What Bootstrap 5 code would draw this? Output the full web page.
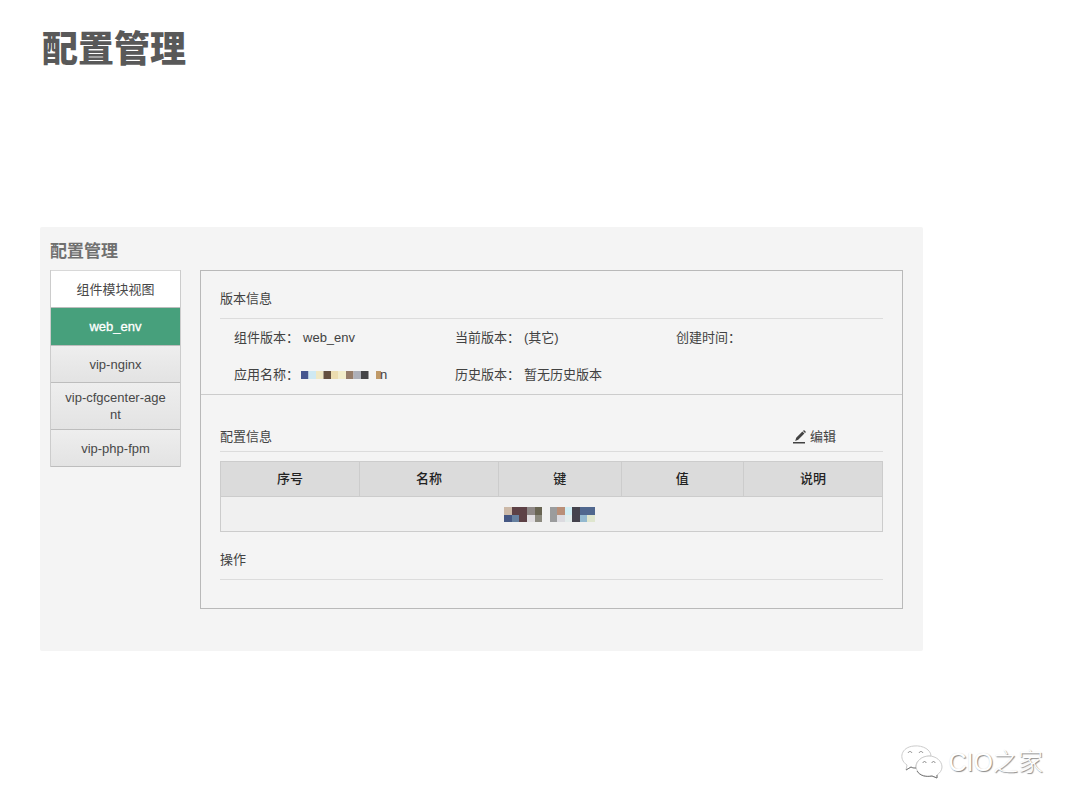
<!DOCTYPE html>
<html lang="zh-CN">
<head>
<meta charset="utf-8">
<meta name="viewport" content="width=device-width, initial-scale=1">
<title>配置管理</title>
<link href="https://cdn.jsdelivr.net/npm/bootstrap@5.3.0/dist/css/bootstrap.min.css" rel="stylesheet">
<style>
  body { font: 13px/20px "Liberation Sans", "Noto Sans CJK SC", sans-serif; color: #424242; background: #fff; }
  .page-title { font-size: 36px; line-height: 40px; font-weight: 900; color: #595959; padding: 30px 42px 0; margin-bottom: 157px; }
  .config-panel { margin: 0 157px 0 40px; padding: 13px 20px 42px 10px; background: #f4f4f4; border-radius: 2px; }
  .panel-title { font-size: 17px; line-height: 24px; margin-bottom: 6px; font-weight: 700; color: #707070; }
  .panel-body-row { gap: 19px; }
  .module-nav { width: 131px; flex: none; text-align: center; border: solid #ccc; border-width: 0 1px; }
  .module-head, .module-nav a { display: flex; align-items: center; justify-content: center; min-height: 37px; padding: 6px 12px; line-height: 17px; word-break: break-all; border-bottom: 1px solid #bdbdbd; color: #484848; text-decoration: none; background: linear-gradient(#eee, #e3e3e3); }
  .module-nav .module-head { min-height: 38px; background: #fff; border-top: 1px solid #d8d8d8; }
  .module-nav a.active { min-height: 38px; background: #47a07c; color: #fff; -webkit-text-stroke: .3px #fff; }
  .detail-box { border: 1px solid #b9b9b9; }
  .detail-part { padding: 0 19px; }
  .detail-part + .detail-part { border-top: 1px solid #ccc; }
  .part-head { padding: 18px 0 9px; border-bottom: 1px solid #dcdcdc; }
  .part-head h3 { font-size: 13px; line-height: 20px; font-weight: 400; margin: 0; }
  .part-head.config-head { padding: 32px 47px 4px 0; }
  .version-list { padding-bottom: 1px; }
  .info-item { height: 37px; padding-left: 14px; gap: 4px; }
  .info-item dt { font-weight: 400; white-space: nowrap; }
  .info-item dd { margin: 0; white-space: nowrap; }
  .edit-btn { color: #424242; font-size: 13px; line-height: 20px; gap: 3px; }
  .config-table { margin: 9px 0 0; width: 100%; table-layout: fixed; border-collapse: collapse; text-align: center; }
  .config-table th, .config-table td { height: 35px; padding: 0; border: 1px solid #ccc; vertical-align: middle; }
  .config-table th { background: #dbdbdb; color: #222; font-weight: 500; }
  .config-table td { background: #f0f0f0; }
  .action-part { min-height: 76px; }
  .source-mark { padding: 0 37px 31px; gap: 6px; color: #fff; font-size: 25px; line-height: 32px; font-weight: 300; text-shadow: 1px 1px 1px #888, 0 0 1px #ddd; }
</style>
</head>
<body>
<main class="min-vh-100 d-flex flex-column">
  <h1 class="page-title">配置管理</h1>
  <section class="config-panel">
    <h2 class="panel-title">配置管理</h2>
    <div class="panel-body-row d-flex align-items-start">
      <nav class="module-nav" aria-label="组件模块视图">
        <div class="module-head">组件模块视图</div>
        <a href="#" class="active" aria-current="page">web_env</a>
        <a href="#">vip-nginx</a>
        <a href="#">vip-cfgcenter-agent</a>
        <a href="#">vip-php-fpm</a>
      </nav>
      <div class="detail-box flex-grow-1">
        <section class="detail-part">
          <div class="part-head"><h3>版本信息</h3></div>
          <dl class="version-list row row-cols-3 g-0 mb-0">
            <div class="info-item col d-flex align-items-center"><dt>组件版本：</dt><dd>web_env</dd></div>
            <div class="info-item col d-flex align-items-center"><dt>当前版本：</dt><dd>(其它)</dd></div>
            <div class="info-item col d-flex align-items-center"><dt>创建时间：</dt><dd></dd></div>
            <div class="info-item col d-flex align-items-center"><dt>应用名称：</dt>
              <dd class="d-flex align-items-center">
                <svg width="77" height="8" viewBox="2 0 77 8" overflow="visible" aria-hidden="true">
                  <path fill="#45568f" d="M0 0h7.5v8H0z"/><path fill="#cfe9f3" d="M7.5 0H15v8H7.5z"/><path fill="#f0e8c4" d="M15 0h7.5v8H15z"/><path fill="#65503f" d="M22.500 0H30v8h-7.500z"/><path fill="#ecdcb0" d="M30 0h7.500v8H30z"/><path fill="#f3edca" d="M37.500 0H45v8h-7.500z"/><path fill="#967c68" d="M45 0h7.500v8H45z"/><path fill="#adafb8" d="M52.500 0H60v8h-7.500z"/><path fill="#444447" d="M60 0h7.500v8H60z"/><path fill="#c09a68" d="M75 0h5v8h-5z"/>
                </svg><span>n</span>
              </dd></div>
            <div class="info-item col d-flex align-items-center"><dt>历史版本：</dt><dd>暂无历史版本</dd></div>
          </dl>
        </section>
        <section class="detail-part">
          <div class="part-head config-head d-flex justify-content-between">
            <h3>配置信息</h3>
            <button type="button" class="edit-btn btn border-0 p-0 d-flex align-items-center">
              <svg width="14" height="14" viewBox="0 0 14 14" aria-hidden="true"><path fill="#424242" d="M2.200 11l1-3.200 6.200-6.200 2 2-6.200 6.200zM10 1l1-1 2 2-1 1zM0 12h12v1.500H0z"/></svg>编辑
            </button>
          </div>
          <table class="config-table">
            <colgroup><col style="width:21%"><col style="width:21%"><col style="width:18.5%"><col style="width:18.5%"><col style="width:21%"></colgroup>
            <thead><tr><th scope="col">序号</th><th scope="col">名称</th><th scope="col">键</th><th scope="col">值</th><th scope="col">说明</th></tr></thead>
            <tbody><tr><td colspan="5">
              <svg class="d-block mx-auto" width="96" height="15" viewBox="0 0 96 15" aria-hidden="true">
                <path fill="#ccb9a8" d="M0 0h8v8H0z"/><path fill="#5d4146" d="M8 0h15v15H8z"/><path fill="#455783" d="M0 8h8v7H0z"/><path fill="#66809f" d="M8 8h7v7H8z"/><path fill="#8e8786" d="M23 0h8v8h-8z"/><path fill="#686452" d="M31 0h7v8h-7z"/><path fill="#e0dde0" d="M23 8h8v7h-8z"/><path fill="#8b897e" d="M31 8h7v7h-7z"/>
                <path fill="#9b9c9d" d="M46 0h7v15h-7z"/><path fill="#b98f78" d="M53 0h8v8h-8z"/><path fill="#dcdbe0" d="M53 8h8v7h-8z"/><path fill="#d0edf3" d="M61 0h7v8h-7z"/><path fill="#e3eceb" d="M61 8h7v7h-7z"/><path fill="#45434d" d="M68 0h8v15h-8z"/><path fill="#50678e" d="M76 0h15v8H76z"/><path fill="#94b9cf" d="M76 8h7v7h-7z"/><path fill="#dfe6ce" d="M83 8h8v7h-8z"/>
              </svg>
            </td></tr></tbody>
          </table>
          <div class="action-part"><div class="part-head"><h3>操作</h3></div></div>
        </section>
      </div>
    </div>
  </section>
  <footer class="source-mark mt-auto d-flex align-items-center justify-content-end">
    <svg width="42" height="34" viewBox="0 0 42 34" fill="#fff" stroke-linejoin="round" aria-hidden="true">
      <g stroke="#ccc" stroke-width="1">
        <path d="M5 25l1-5C-3 14 0 2 13 1c9-1 17 4 17 10-9 0-16 5-15 12-2 0-4 0-5-1z"/>
        <path d="M36 33l-5-2c-8 2-15-2-16-9 0-6 6-11 13-11s13 5 13 11c0 3-2 6-5 8z"/>
      </g>
      <path d="M5 25l5-3c2 1 3 1 5 1M16 26c3 5 9 6 15 5l5 2v-3" fill="none" stroke="#777"/>
      <path d="M7 8c1-2 3-2 4 0M18 8c1-2 3-2 4 0M22 18c0-2 3-2 3 0M31 18c0-2 3-2 3 0" fill="none" stroke="#888"/>
    </svg>
    <span>CIO之家</span>
  </footer>
</main>
<script src="https://cdn.jsdelivr.net/npm/bootstrap@5.3.0/dist/js/bootstrap.bundle.min.js"></script>
</body>
</html>
